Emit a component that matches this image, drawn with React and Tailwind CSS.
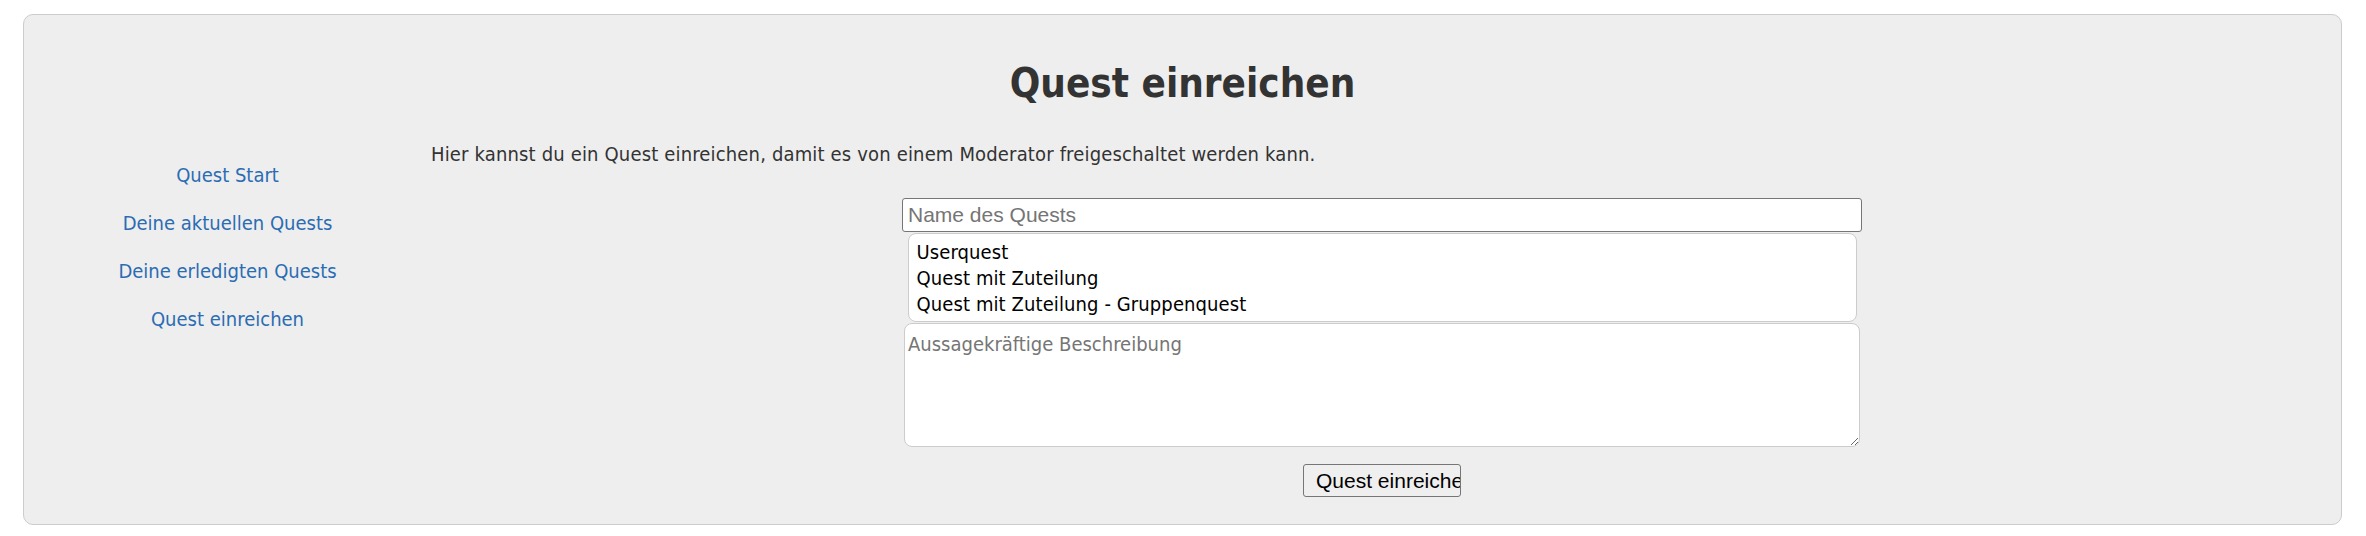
import React from 'react';

const navLinks = ['Quest Start', 'Deine aktuellen Quests', 'Deine erledigten Quests', 'Quest einreichen'];
const questTypes = ['Userquest', 'Quest mit Zuteilung', 'Quest mit Zuteilung - Gruppenquest'];

const QuestSubmit = () => {
  return (
    <div className="min-h-[536px] bg-white pt-[14px] pb-[11px] text-[#333333] [font-family:'DejaVu_Sans_Condensed','DejaVu_Sans',sans-serif]">
      <div className="ml-[23px] w-[2319px] rounded-[10px] border border-[#cccccc] bg-[#eeeeee] pb-[27px]">
        <h1 className="mt-[44px] text-center text-[40px] leading-[48px] font-bold">Quest einreichen</h1>

        <div className="mt-[35px] flex">
          {/* side navigation */}
          <nav className="w-[407px] pt-[21px] flex flex-col items-center gap-[24px]">
            {navLinks.map(link => (
              <a key={link} href="#" className="text-[20px] leading-[24px] text-[#2b6cb3]">{link}</a>
            ))}
          </nav>

          <div className="flex-1 pr-[8px]">
            <p className="text-[20px] leading-[24px] tracking-[0.16px]">
              Hier kannst du ein Quest einreichen, damit es von einem Moderator freigeschaltet werden kann.
            </p>

            <form className="mt-[32px] flex flex-col items-center" onSubmit={e => e.preventDefault()}>
              <input
                type="text"
                placeholder="Name des Quests"
                className="w-[960px] h-[34px] rounded-[3px] border border-[#767676] bg-white px-[5px] text-[21px] text-black [font-family:'Liberation_Sans',Arial,sans-serif] placeholder:text-[#757575] outline-none"
              />

              <div className="mt-[1px] w-[949px] h-[89px] rounded-[8px] border border-[#cccccc] bg-white pt-[5px] pl-[8px] text-[20px] text-black tracking-[0.1px]">
                {questTypes.map(type => (
                  <div key={type} className="leading-[26px]">{type}</div>
                ))}
              </div>

              <textarea
                placeholder="Aussagekräftige Beschreibung"
                className="mt-[1px] w-[956px] h-[124px] rounded-[8px] border border-[#cccccc] bg-white px-[3px] pt-[8px] text-[20px] leading-[24px] text-black placeholder:text-[#757575] outline-none"
              />

              <button
                type="submit"
                className="mt-[17px] w-[158px] h-[33px] overflow-hidden whitespace-nowrap rounded-[3px] border border-[#767676] bg-[#efefef] pl-[12px] text-left text-[21px] text-black [font-family:'Liberation_Sans',Arial,sans-serif]"
              >
                Quest einreichen
              </button>
            </form>
          </div>
        </div>
      </div>
    </div>
  );
};

export default function App() {
  return <QuestSubmit />;
}
